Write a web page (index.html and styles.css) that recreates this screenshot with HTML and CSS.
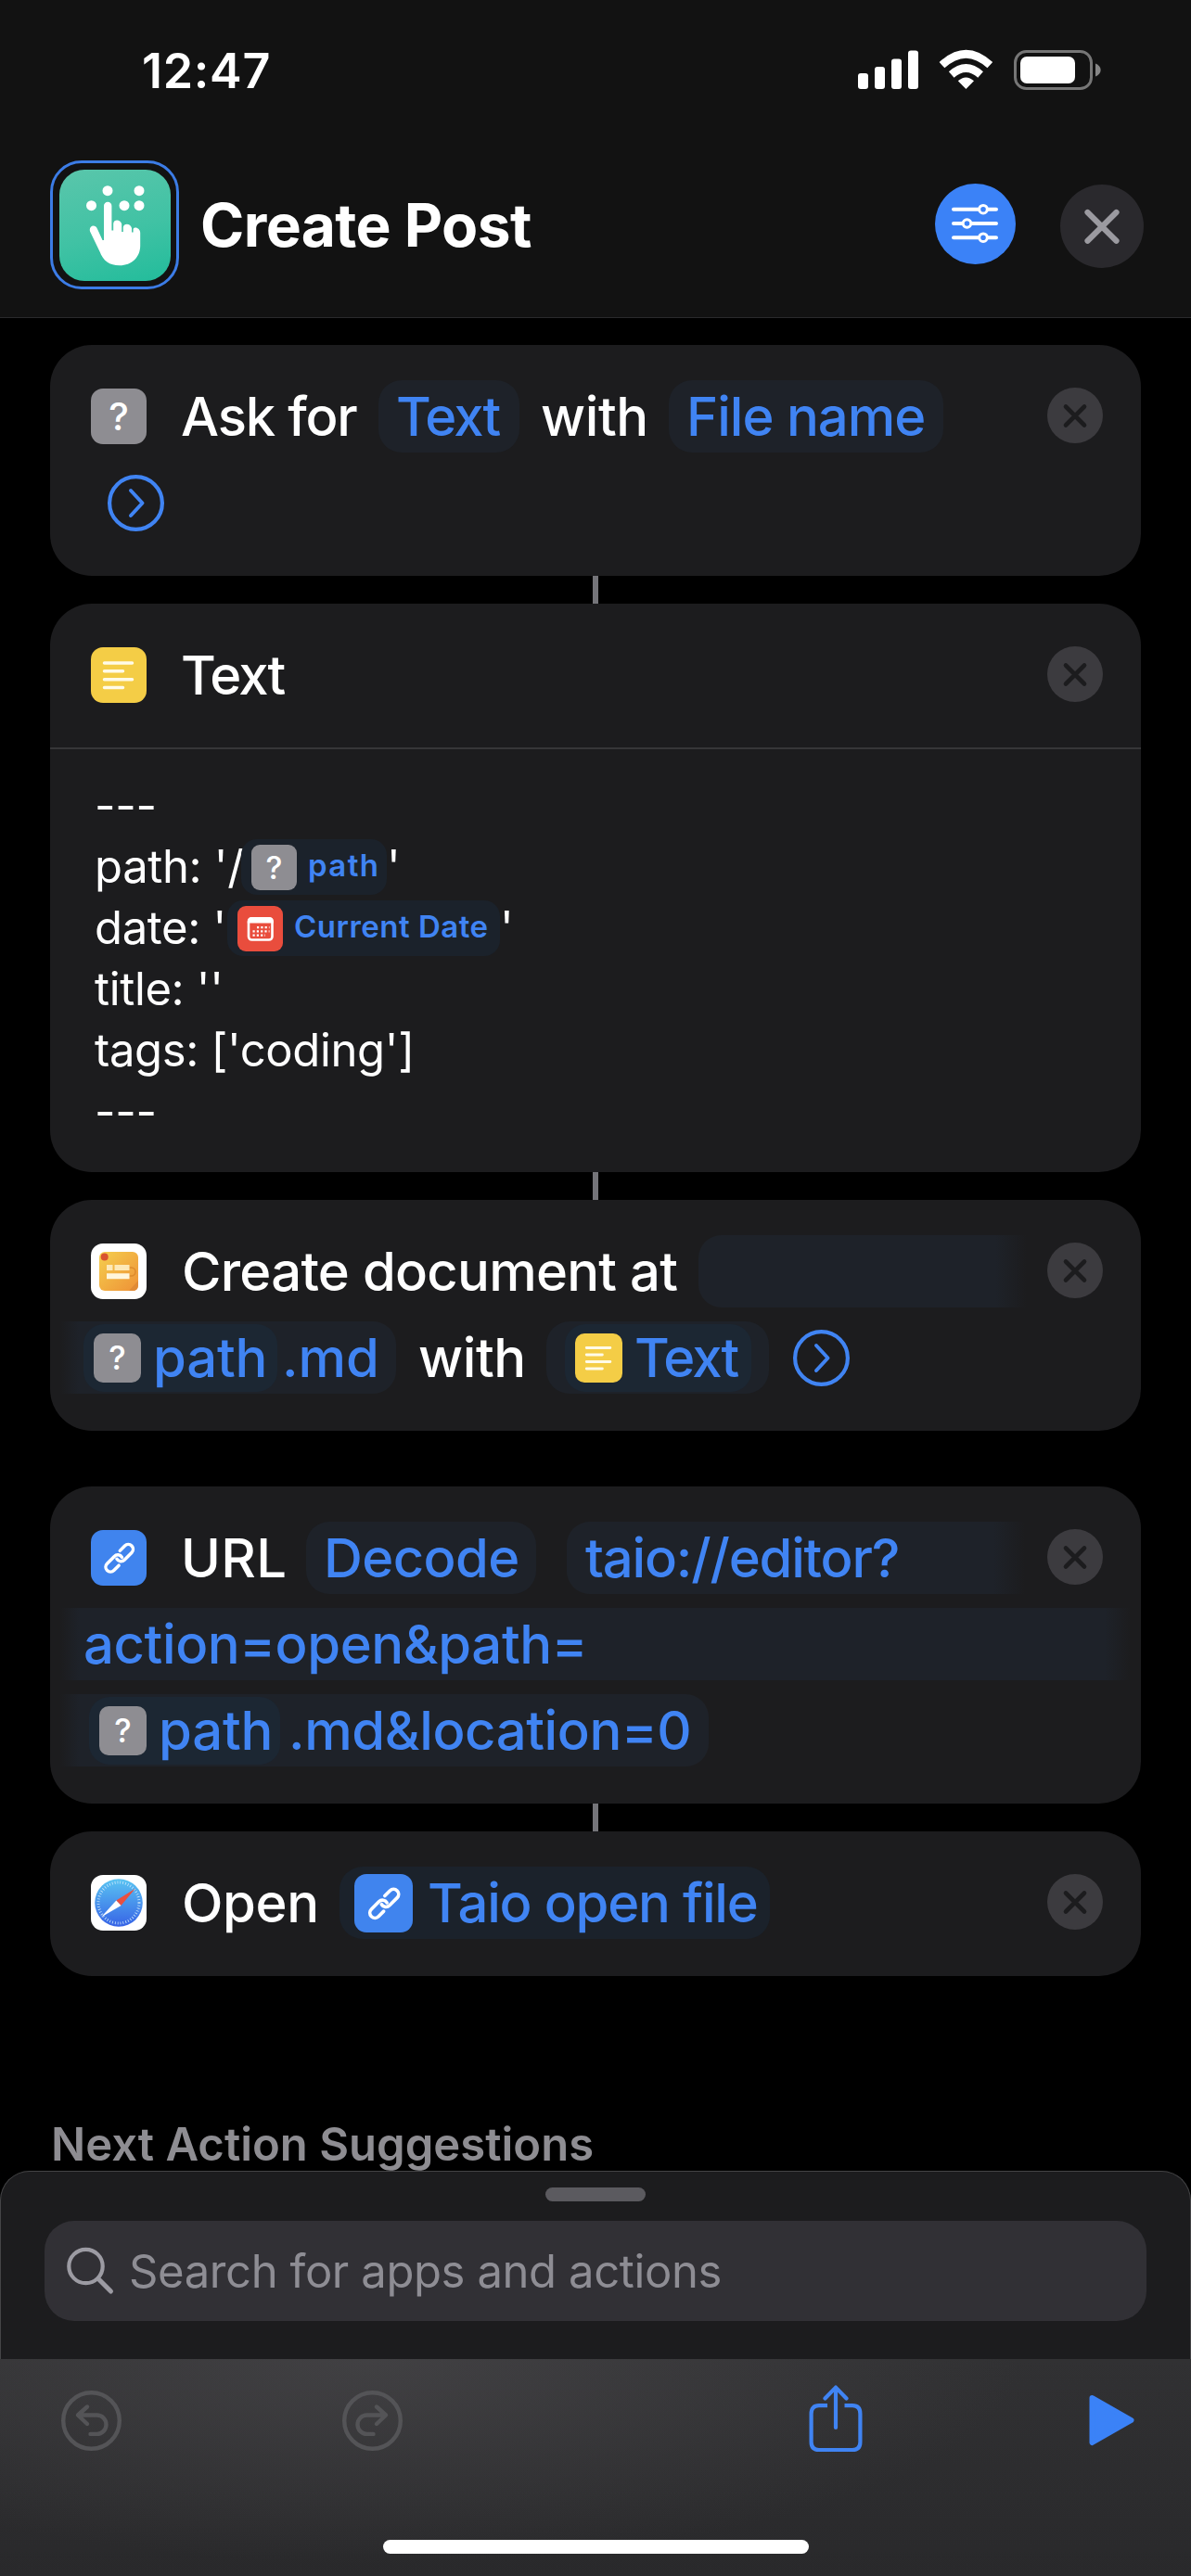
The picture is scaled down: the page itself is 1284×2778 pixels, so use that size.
FILE: index.html
```html
<!DOCTYPE html>
<html lang="en">
<head>
<meta charset="utf-8">
<title>Create Post</title>
<link rel="stylesheet" href="styles.css">
</head>
<body>
<svg class="defs" aria-hidden="true">
  <defs>
    <linearGradient id="taio" x1="0" y1="0" x2="1" y2="1"><stop offset="0" stop-color="#f5cf4e"/><stop offset="1" stop-color="#ee9136"/></linearGradient>
    <linearGradient id="sea" x1="0" y1="0" x2="0" y2="1"><stop offset="0" stop-color="#5ac4f2"/><stop offset="1" stop-color="#3763e6"/></linearGradient>
  </defs>
  <symbol id="remove" viewBox="0 0 60 60"><circle cx="30" cy="30" r="30" fill="#3c3b3f"/><path d="M20 20.500 40 40.500M40 20.500 20 40.500" stroke="#1c1c1e" stroke-width="4.600" stroke-linecap="round"/></symbol>
  <symbol id="more" viewBox="0 0 61 61"><circle cx="30.500" cy="30.500" r="28.400" fill="none" stroke="#4084f3" stroke-width="4.200"/><path d="M25 17 37.500 30.500 25 44" fill="none" stroke="#4084f3" stroke-width="4" stroke-linecap="round" stroke-linejoin="round"/></symbol>
  <symbol id="link" viewBox="0 0 60 60"><g transform="translate(30.700 30.300) rotate(-45)" fill="none" stroke="#fff" stroke-width="3.500" stroke-linecap="round"><path d="M-6 5.200H-13.500A5.200 5.200 0 0 1-13.500-5.200H-2.500A5.200 5.200 0 0 1 2.600 1.300"/><path d="M6-5.200H13.500A5.200 5.200 0 0 1 13.500 5.200H2.500A5.200 5.200 0 0 1-2.600-1.300"/></g></symbol>
  <symbol id="lines" viewBox="0 0 60 60"><path d="M14.500 17H44.500M14.500 25.800H34.500M14.500 34.700H44.500M14.500 43.500H34.500" stroke="#fffbe8" stroke-width="3.500" stroke-linecap="round"/></symbol>
</svg>

<header class="header">
  <div class="status">
    <span class="time">12:47</span>
    <svg class="status-icons" width="264" height="46" viewBox="0 0 264 46">
      <g fill="#fff"><rect x="1" y="27" width="11" height="17" rx="3"/><rect x="19" y="20" width="11" height="24" rx="3"/><rect x="37" y="11.500" width="11" height="32.500" rx="3"/><rect x="55" y="2.500" width="11" height="41.500" rx="3"/>
      <path d="M117.400 44 108.800 35.300Q117.400 27.500 126 35.300Z"/></g>
      <g fill="none" stroke="#fff" stroke-width="8.500"><path d="M101.700 28.500Q117.400 14.500 133.100 28.500"/><path d="M91.500 18.200Q117.400-5.800 143.300 18.200"/></g>
      <rect x="170.500" y="3.500" width="82" height="40" rx="12" fill="none" stroke="#767676" stroke-width="3"/>
      <rect x="176" y="9" width="59" height="29" rx="7" fill="#fff"/>
      <path d="M257 16.500c7.500 2.500 7.500 11.500 0 14Z" fill="#868686"/>
    </svg>
  </div>
  <div class="titlebar">
    <div class="app-frame">
      <svg class="app-icon" viewBox="0 0 120 120" fill="#fff">
        <circle cx="52" cy="22.700" r="5.500"/><circle cx="86" cy="22.700" r="5.500"/><circle cx="34.500" cy="38.700" r="5.500"/><circle cx="70" cy="38.700" r="5.500"/><circle cx="86" cy="38.700" r="5.500"/>
        <path d="M48 76V39a4.200 4.200 0 0 1 8.400 0V65.500h1.800V58c.6-5 7.600-4.400 9 .5V67h1.600v-5c1-5 8-4 9.200 1v4.500h1.600V64c2-3.500 7.600-.5 7.600 4v14c0 12-9 21.300-22.200 21.300-11 0-17.800-5-21.500-15L33 66.500c-1.600-6 5.500-8.400 8-2.500L46.500 76Z"/>
      </svg>
    </div>
    <h1 class="title">Create Post</h1>
    <svg class="settings" viewBox="0 0 87 87"><circle cx="43.500" cy="43.500" r="43.500" fill="#3b82f7"/><path d="M20 27.700H66M20 43H66M20 58.200H66" stroke="#fff" stroke-width="4" stroke-linecap="round"/><g fill="#3b82f7" stroke="#fff" stroke-width="3"><circle cx="52" cy="27.700" r="4.300"/><circle cx="34.500" cy="43" r="4.300"/><circle cx="52" cy="58.200" r="4.300"/></g></svg>
    <svg class="close" viewBox="0 0 90 90"><circle cx="45" cy="45" r="45" fill="#2a292d"/><path d="M29.500 30 60.500 60.800M60.500 30 29.500 60.800" stroke="#9b9aa0" stroke-width="6.200" stroke-linecap="round"/></svg>
  </div>
</header>

<main class="flow">
  <section class="card">
    <div class="row">
      <span class="icon gray">?</span>
      <span class="word ask">Ask for</span>
      <span class="pill pill-text">Text</span>
      <span class="word with-a">with</span>
      <span class="pill pill-file">File name</span>
      <svg class="remove"><use href="#remove"/></svg>
    </div>
    <div class="row"><svg class="more more-start"><use href="#more"/></svg></div>
  </section>
  <div class="connector"></div>

  <section class="card">
    <div class="row">
      <span class="icon yellow"><svg><use href="#lines"/></svg></span>
      <span class="word tight">Text</span>
      <svg class="remove"><use href="#remove"/></svg>
    </div>
    <div class="code">
      <div class="line">---</div>
      <div class="line"><span class="key-path">path: '/</span><span class="chip chip-path"><span class="icon gray">?</span><span class="chip-label">path</span></span><span>'</span></div>
      <div class="line"><span class="key-date">date: '</span><span class="chip chip-date"><span class="icon red"><svg viewBox="0 0 48 49"><rect x="11.500" y="13.500" width="25.500" height="23" rx="3.500" fill="none" stroke="#fff" stroke-width="2.600"/><path d="M10.300 18.500v-2q0-4.500 4.500-4.500h19q4.500 0 4.500 4.500v2Z" fill="#fff"/><path d="M20.500 23.200H34M16 27.400H34M16 31.700H29.500" stroke="#fff" stroke-width="2.200" stroke-dasharray="2.200 2.100"/></svg></span><span class="chip-label snug">Current Date</span></span><span>'</span></div>
      <div class="line">title: ''</div>
      <div class="line">tags: ['coding']</div>
      <div class="line">---</div>
    </div>
  </section>
  <div class="connector"></div>

  <section class="card">
    <div class="row">
      <span class="icon white"><svg viewBox="0 0 60 60"><rect x="9" y="9" width="42" height="42" rx="6" fill="url(#taio)"/><path d="M41.500 26h2a4.500 4.500 0 0 1 0 9h-2" fill="none" stroke="#dd8a2c" stroke-width="1.500"/><path d="M41 51 51 40v5q0 6-6 6Z" fill="#e08a35"/><circle cx="14.700" cy="14.500" r="4" fill="#d9532f"/><path d="M17 23h6.500v6H17ZM25.500 23h16v6h-16Z" fill="#fde9b8"/><path d="M17 32.300h24.500v6H17Z" fill="#fff6dc"/></svg></span>
      <span class="word create">Create document at</span>
      <span class="pill pill-blank"></span>
      <svg class="remove"><use href="#remove"/></svg>
    </div>
    <div class="row">
      <span class="pill pill-md"><span class="token"><span class="icon gray">?</span><span>path</span></span><span class="md">.md</span></span>
      <span class="word with-b">with</span>
      <span class="pill pill-var"><span class="token"><span class="icon yellow"><svg><use href="#lines"/></svg></span><span class="tight">Text</span></span></span>
      <svg class="more"><use href="#more"/></svg>
    </div>
  </section>

  <section class="card spaced">
    <div class="row">
      <span class="icon blue"><svg><use href="#link"/></svg></span>
      <span class="word url">URL</span>
      <span class="pill pill-decode">Decode</span>
      <span class="pill pill-taio">taio://editor?</span>
      <svg class="remove"><use href="#remove"/></svg>
    </div>
    <div class="row"><span class="pill pill-action">action=open&amp;path=</span></div>
    <div class="row"><span class="pill pill-location"><span class="token"><span class="icon gray">?</span><span>path</span></span><span class="location">.md&amp;location=0</span></span></div>
  </section>
  <div class="connector"></div>

  <section class="card">
    <div class="row">
      <span class="icon white"><svg viewBox="0 0 60 60"><circle cx="30" cy="30" r="25.800" fill="url(#sea)"/><circle cx="30" cy="30" r="22" fill="none" stroke="#c9e6fb" stroke-width="3" stroke-dasharray=".8 2.100"/><path d="M47.700 14.700 32.500 33 27.300 27.500Z" fill="#ea4f41"/><path d="M11 45.500 27.300 27.500 32.500 33Z" fill="#fff"/></svg></span>
      <span class="word open">Open</span>
      <span class="pill pill-open"><span class="icon blue"><svg><use href="#link"/></svg></span><span>Taio open file</span></span>
      <svg class="remove"><use href="#remove"/></svg>
    </div>
  </section>

  <h2 class="next">Next Action Suggestions</h2>
</main>

<section class="sheet">
  <div class="grabber"></div>
  <div class="search">
    <svg viewBox="0 0 52 52"><circle cx="20.500" cy="21" r="18.200" fill="none" stroke="#9c9ba3" stroke-width="4.200"/><path d="M34 34.500 47.500 48" stroke="#9c9ba3" stroke-width="5" stroke-linecap="round"/></svg>
    <span>Search for apps and actions</span>
  </div>
</section>

<footer class="toolbar">
  <div class="tools">
    <svg class="undo" viewBox="0 0 65 65"><g fill="none" stroke="#545457" stroke-width="4.400" stroke-linecap="round" stroke-linejoin="round"><circle cx="32.500" cy="32.500" r="30.300"/><path d="M28 17.500 18 26.500 28 36M18.500 26.500H38.500a10 10.200 0 0 1 0 20.400H31.500"/></g></svg>
    <svg class="redo" viewBox="0 0 65 65"><g fill="none" stroke="#545457" stroke-width="4.400" stroke-linecap="round" stroke-linejoin="round"><circle cx="32.500" cy="32.500" r="30.300"/><path d="M37 17.500 47 26.500 37 36M46.500 26.500H26.500a10 10.200 0 0 0 0 20.400H33.500"/></g></svg>
    <svg class="share" viewBox="0 0 58 74"><g fill="none" stroke="#4084f3" stroke-width="4.200"><path d="M20 22.200H11Q2.600 22.200 2.600 31V61.500Q2.600 70 11 70H47Q55.400 70 55.400 61.500V31Q55.400 22.200 47 22.200H38.500"/><path d="M29 46V3M17.500 14.500 29 2.600 40.500 14.500" stroke-linecap="round" stroke-linejoin="round"/></g></svg>
    <svg class="play" viewBox="0 0 49 56"><path d="M3.500 4 45.500 28 3.500 52Z" fill="#3b82f7" stroke="#3b82f7" stroke-width="6" stroke-linejoin="round"/></svg>
  </div>
  <div class="home"></div>
</footer>
</body>
</html>
```
FILE: styles.css
```css
* { box-sizing: border-box; }
body {
  margin: 0;
  width: 1284px;
  height: 2778px;
  display: flex;
  flex-direction: column;
  overflow: hidden;
  background: #000;
  color: #fff;
  font-family: Inter, "Liberation Sans", sans-serif;
}
h1, h2 { margin: 0; }
svg { display: block; flex: none; }
.defs { width: 0; height: 0; }

/* header */
.header {
  flex: none;
  height: 343px;
  background: #121212;
  border-bottom: 1px solid #2a2a2c;
}
.status {
  height: 172px;
  padding: 45px 96px 0 153px;
  display: flex;
  justify-content: space-between;
  align-items: flex-start;
}
.time { font-size: 52px; line-height: 63px; font-weight: 600; letter-spacing: .7px; }
.status-icons { margin-top: 7px; }
.titlebar { height: 139px; padding: 0 51px 0 54px; display: flex; align-items: center; }
.app-frame {
  width: 139px;
  height: 139px;
  margin-top: 2px;
  padding: 7px 6px 6px 7px;
  border: 3px solid #3c7ce6;
  border-radius: 34px;
  flex: none;
}
.app-icon {
  width: 120px;
  height: 120px;
  border-radius: 27px;
  background: linear-gradient(165deg, #5ac6ab, #40c2a4 55%, #22bc9b);
}
.title { margin: 2px 0 0 23px; font-size: 64px; line-height: 78px; font-weight: 700; letter-spacing: -.6px; }
.settings { width: 87px; height: 87px; margin-left: auto; }
.close { width: 90px; height: 90px; margin: 5px 0 0 48px; }

/* action list */
.flow { flex: 1; min-height: 0; padding: 29px 54px 0; }
.card {
  background: #1c1c1e;
  border-radius: 45px;
  overflow: hidden;
  padding: 38px 0 40px;
  display: flex;
  flex-direction: column;
  gap: 15px;
}
.spaced { margin-top: 60px; }
.connector { width: 6px; height: 30px; margin: 0 auto; background: #747479; }
.row {
  height: 78px;
  display: flex;
  align-items: center;
  font-size: 58px;
  line-height: 78px;
  font-weight: 500;
  letter-spacing: -.4px;
  white-space: nowrap;
}
.icon {
  flex: none;
  width: 60px;
  height: 60px;
  border-radius: 13px;
  display: flex;
  align-items: center;
  justify-content: center;
  font-size: 41px;
  line-height: 60px;
  font-weight: 500;
  letter-spacing: 0;
  color: #fff;
}
.row > .icon { margin-left: 44px; }
.icon svg { width: 100%; height: 100%; }
.gray { background: #8e8d92; }
.yellow { background: #f4cd46; }
.red { background: #e94d3d; }
.blue { background: #4084ee; }
.white { background: #fff; }
.remove { width: 60px; height: 60px; margin: -2px 41px 0 auto; }
.more { width: 61px; height: 61px; margin-left: 26px; }
.more-start { margin-left: 62px; }
.word { margin-left: 37px; flex: none; }
.ask { width: 215px; letter-spacing: -1.2px; }
.tight { letter-spacing: -2px; }
.create { width: 558px; margin-left: 38px; letter-spacing: -.75px; }
.url { width: 137px; margin-left: 37px; letter-spacing: .4px; }
.open { width: 171px; margin-left: 38px; }
.with-a { width: 138px; margin-left: 23px; }
.with-b { width: 139px; margin-left: 24px; }

.pill {
  height: 78px;
  border-radius: 25px;
  background: #1e2229;
  color: #4084f3;
  display: flex;
  align-items: center;
  flex: none;
}
.pill-text { width: 152px; margin-left: -2px; padding-left: 19px; letter-spacing: -2px; }
.pill-file { width: 296px; padding-left: 19px; letter-spacing: -1px; }
.pill-blank {
  width: 354px;
  margin-left: -1px;
  border-radius: 25px 0 0 25px;
  background: linear-gradient(90deg, #1e2229 320px, #1c1c1e);
}
.pill-decode { width: 248px; margin-left: -2px; padding-left: 19px; letter-spacing: -.6px; }
.pill-taio {
  width: 494px;
  margin-left: 33px;
  padding-left: 20px;
  border-radius: 25px 0 0 25px;
  letter-spacing: -1.2px;
  background: linear-gradient(90deg, #1e2229 460px, #1c1c1e);
}
.pill-action {
  width: 1154px;
  margin-left: 11px;
  padding-left: 25px;
  border-radius: 0;
  background: linear-gradient(90deg, #1c1c1e, #1e2229 20px, #1e2229 1126px, #1c1c1e);
}
.pill-md, .pill-location {
  margin-left: 11px;
  border-radius: 0 25px 25px 0;
  background: linear-gradient(90deg, #1c1c1e, #1e2229 20px);
}
.pill-md { width: 362px; padding-left: 25px; }
.pill-location { width: 699px; padding-left: 31px; }
.token {
  height: 73px;
  border-radius: 22px;
  background: #1c2733;
  display: flex;
  align-items: center;
  gap: 13px;
  padding-left: 11px;
  letter-spacing: -.2px;
  line-height: 73px;
}
.token .icon { width: 51px; height: 53px; border-radius: 10px; font-size: 35px; line-height: 53px; }
.pill-md .token { width: 209px; }
.pill-location .token { width: 206px; }
.md { margin-left: 5px; letter-spacing: 0; }
.location { margin-left: 9px; }
.pill-var { width: 240px; padding-left: 20px; margin-left: -1px; }
.pill-var .token { width: 201px; }
.pill-var .tight { letter-spacing: -2px; }
.pill-open { width: 464px; margin-left: -1px; padding-left: 16px; gap: 16px; letter-spacing: -1.2px; background: #1b222b; }
.pill-open .icon { width: 63px; height: 63px; }

/* text editor */
.code {
  margin-top: 24px;
  margin-bottom: -8px;
  border-top: 2px solid #363638;
  padding: 28px 48px 0;
  font-size: 49px;
  line-height: 66px;
  letter-spacing: -.35px;
  white-space: nowrap;
}
.line { height: 66px; display: flex; align-items: center; }
.key-path { width: 158px; }
.key-date { width: 143px; }
.chip {
  height: 60px;
  border-radius: 17px;
  background: #1b222b;
  display: flex;
  align-items: center;
  padding-left: 11px;
  gap: 12px;
  flex: none;
}
.chip-path { width: 157px; }
.chip-date { width: 294px; }
.chip .icon { width: 49px; height: 49px; border-radius: 9px; font-size: 34px; line-height: 49px; }
.chip-label { margin-top: -3px; font-size: 33px; line-height: 57px; font-weight: 600; letter-spacing: 1.4px; color: #4084f3; }
.snug { letter-spacing: .5px; }

.next {
  margin-top: 154px;
  padding-left: 1px;
  font-size: 49px;
  line-height: 56px;
  font-weight: 600;
  color: #8e8d92;
  white-space: nowrap;
}

/* search sheet */
.sheet {
  flex: none;
  height: 203px;
  border: 1px solid #444446;
  border-bottom: 0;
  border-radius: 32px 32px 0 0;
  background: #1c1c1e;
  padding: 17px 47px 0;
}
.grabber { width: 108px; height: 15px; border-radius: 8px; margin: 0 auto 21px; background: #5b5a5f; }
.search {
  height: 108px;
  border-radius: 32px;
  background: #313035;
  display: flex;
  align-items: center;
  padding-left: 24px;
  font-size: 49px;
  letter-spacing: -.4px;
  color: #8e8d94;
}
.search svg { width: 52px; height: 52px; margin-right: 15px; }

/* toolbar */
.toolbar {
  flex: none;
  height: 234px;
  background:
    radial-gradient(ellipse 700px 220px at 400px 0, rgba(72, 71, 74, .7), transparent),
    linear-gradient(#313133, #29292b);
}
.tools { height: 195px; padding: 28px 61px 0 66px; display: flex; align-items: flex-start; }
.undo, .redo { width: 65px; height: 65px; margin-top: 6px; }
.redo { margin-left: 238px; }
.share { width: 58px; height: 74px; margin-left: 438px; }
.play { width: 49px; height: 56px; margin: 10px 0 0 auto; }
.home { width: 459px; height: 15px; border-radius: 8px; margin: 0 auto; background: #fff; }
```
